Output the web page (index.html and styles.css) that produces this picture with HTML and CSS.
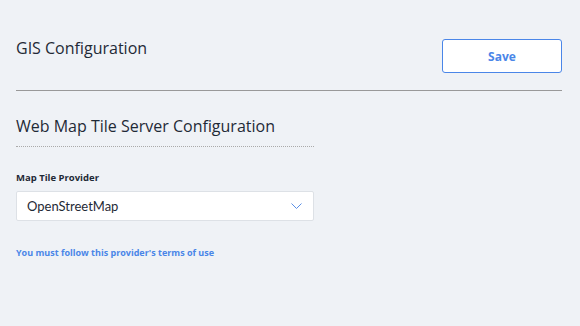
FILE: index.html
```html
<!DOCTYPE html>
<html lang="en">
<head>
    <meta charset="UTF-8">
    <title>GIS Configuration</title>
    <link rel="stylesheet" href="styles.css">
</head>
<body>
    <div class="page">
        <header class="page-header">
            <h1>GIS Configuration</h1>
            <button class="save-btn">Save</button>
        </header>

        <section class="section">
            <h2>Web Map Tile Server Configuration</h2>

            <label for="provider">Map Tile Provider</label>
            <div class="select" id="provider">
                <span class="select-value">OpenStreetMap</span>
                <svg class="chevron" width="11" height="6" viewBox="0 0 11 6">
                    <path d="M0.5 0.5 L5.5 5.5 L10.5 0.5" fill="none" stroke="#5b8fe6" stroke-width="1"/>
                </svg>
            </div>

            <a href="#" class="terms-link">You must follow this provider's terms of use</a>
        </section>
    </div>
</body>
</html>
```

FILE: styles.css
```css
:root {
    --bg-color: #eff2f6;
    --text-color: #1f2a36;
    --accent-color: #4a86e8;
    --line-color: #999;
}

body {
    font-family: 'Open Sans', sans-serif;
    background-color: var(--bg-color);
    color: var(--text-color);
    margin: 0;
    padding: 0;
}

.page {
    padding: 0 18px 0 16px;
}

.page-header {
    display: flex;
    justify-content: space-between;
    align-items: flex-start;
    padding-top: 39px;
    padding-bottom: 17px;
    border-bottom: 1px solid var(--line-color);
}

h1 {
    font-size: 16px;
    font-weight: 400;
    margin: 0;
    line-height: 18px;
}

.save-btn {
    width: 120px;
    height: 34px;
    background-color: white;
    border: 1px solid var(--accent-color);
    border-radius: 3px;
    color: var(--accent-color);
    font-family: 'Open Sans', sans-serif;
    font-size: 12px;
    font-weight: 700;
    cursor: pointer;
}

.section {
    width: 298px;
}

h2 {
    font-size: 16px;
    font-weight: 400;
    margin: 0;
    padding-top: 24px;
    padding-bottom: 9px;
    line-height: 22px;
    border-bottom: 1px dotted #aaa;
}

label {
    display: block;
    margin-top: 25px;
    font-size: 9.5px;
    font-weight: 700;
    line-height: 12px;
}

.select {
    display: flex;
    justify-content: space-between;
    align-items: center;
    margin-top: 7px;
    height: 28px;
    padding: 0 11px 0 10px;
    background-color: white;
    border: 1px solid #dde1e6;
    border-radius: 2px;
    font-family: 'Lato', sans-serif;
    font-size: 13px;
}

.terms-link {
    display: block;
    margin-top: 25px;
    color: var(--accent-color);
    font-size: 9px;
    font-weight: 700;
    text-decoration: none;
}
```
